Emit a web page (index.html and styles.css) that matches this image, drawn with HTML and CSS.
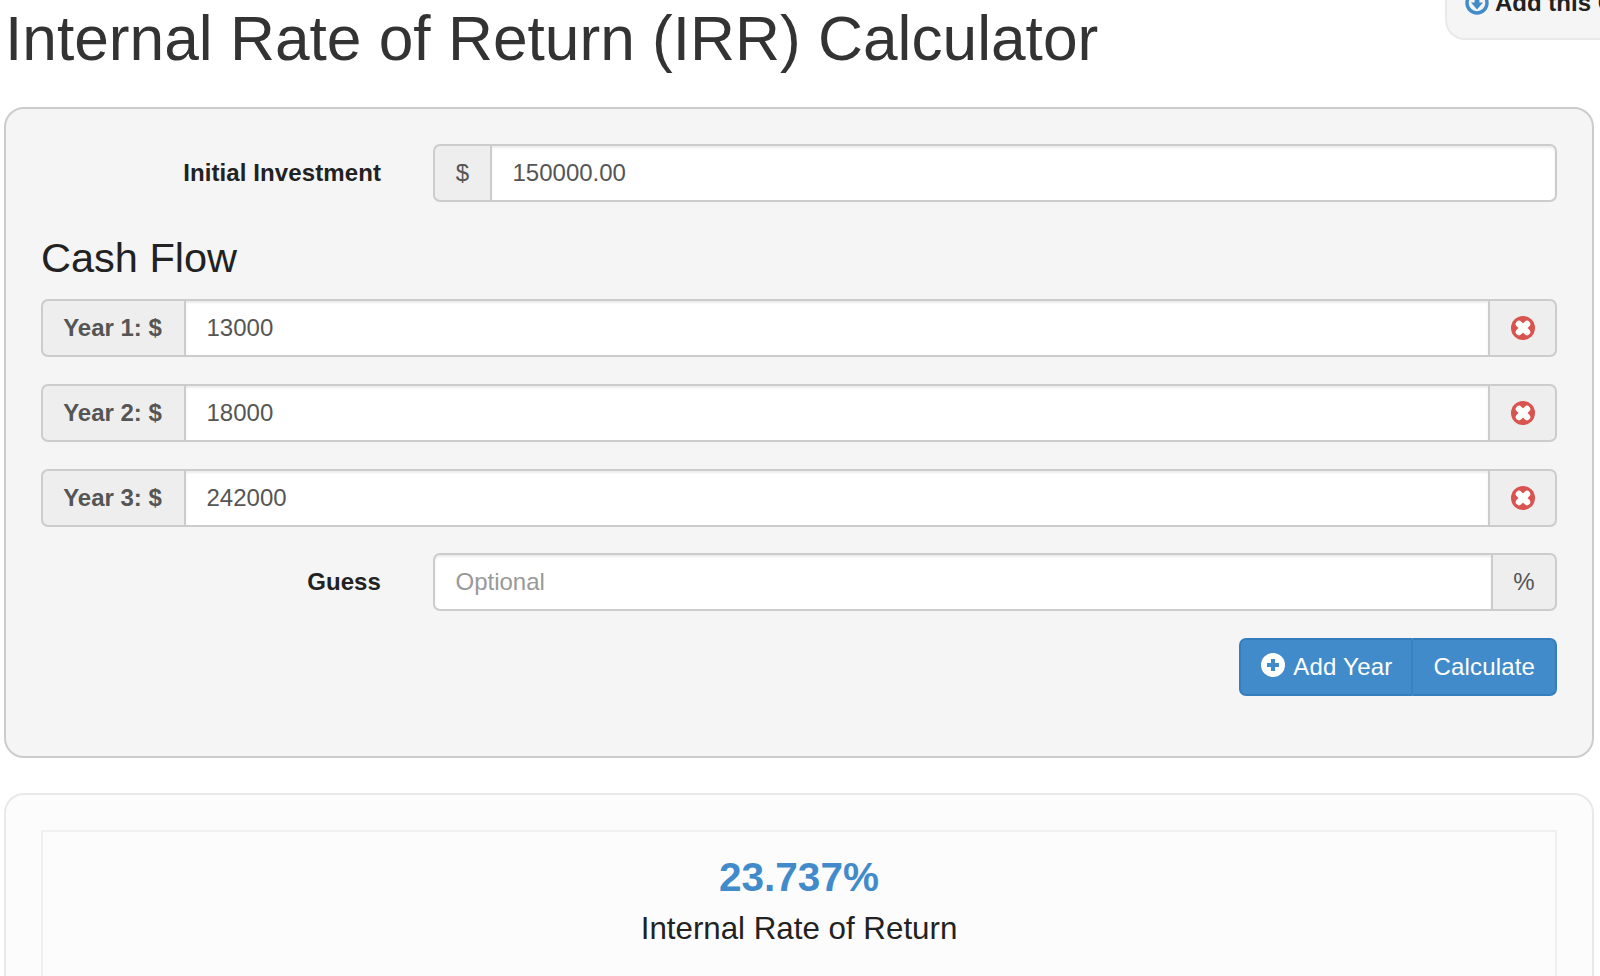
FILE: index.html
```html
<!DOCTYPE html>
<html lang="en">
<head>
    <meta charset="UTF-8">
    <title>Internal Rate of Return (IRR) Calculator</title>
    <link rel="stylesheet" href="styles.css">
</head>
<body>
    <div class="irr-page">
        <div class="add-tool">
            <svg class="add-tool-icon" viewBox="0 0 24 24">
                <circle cx="12" cy="12" r="10" fill="none" stroke="#428bca" stroke-width="3.4"/>
                <path d="M9.6 5.500h4.800v6h3.600L12 18.400 6 11.500h3.600z" fill="#428bca"/>
            </svg>
            <span>Add this Calculator</span>
        </div>

        <h1 class="irr-title">Internal Rate of Return (IRR) Calculator</h1>

        <form class="irr-well">
            <div class="form-row">
                <label class="form-label">Initial Investment</label>
                <div class="input-group">
                    <span class="addon addon-left">$</span>
                    <input class="form-control" type="text" value="150000.00">
                </div>
            </div>

            <h3 class="cash-title">Cash Flow</h3>

            <div class="input-group year-row">
                <span class="addon addon-left addon-year">Year 1: $</span>
                <input class="form-control" type="text" value="13000">
                <span class="addon addon-right addon-remove">
                    <svg class="remove-icon" viewBox="0 0 24 24"><use href="#remove-sign"/></svg>
                </span>
            </div>
            <div class="input-group year-row">
                <span class="addon addon-left addon-year">Year 2: $</span>
                <input class="form-control" type="text" value="18000">
                <span class="addon addon-right addon-remove">
                    <svg class="remove-icon" viewBox="0 0 24 24"><use href="#remove-sign"/></svg>
                </span>
            </div>
            <div class="input-group year-row">
                <span class="addon addon-left addon-year">Year 3: $</span>
                <input class="form-control" type="text" value="242000">
                <span class="addon addon-right addon-remove">
                    <svg class="remove-icon" viewBox="0 0 24 24"><use href="#remove-sign"/></svg>
                </span>
            </div>

            <div class="form-row">
                <label class="form-label">Guess</label>
                <div class="input-group">
                    <input class="form-control form-control-left" type="text" placeholder="Optional">
                    <span class="addon addon-right addon-percent">%</span>
                </div>
            </div>

            <div class="btn-row">
                <div class="btn-group">
                    <button class="btn btn-add" type="button">
                        <svg class="plus-icon" viewBox="0 0 24 24">
                            <circle cx="12" cy="12" r="12" fill="#fff"/>
                            <path d="M10 6h4v4h4v4h-4v4h-4v-4H6v-4h4z" fill="#428bca"/>
                        </svg>
                        Add Year
                    </button>
                    <button class="btn btn-calc" type="button">Calculate</button>
                </div>
            </div>
        </form>

        <div class="irr-result">
            <div class="result-box">
                <div class="result-value">23.737%</div>
                <div class="result-label">Internal Rate of Return</div>
            </div>
        </div>
    </div>

    <svg class="svg-defs" width="0" height="0">
        <symbol id="remove-sign" viewBox="0 0 24 24">
            <circle cx="12" cy="12" r="12" fill="#d9534f"/>
            <path d="M8 8l8 8M16 8l-8 8" fill="none" stroke="#fff" stroke-width="6.500" stroke-linecap="round"/>
        </symbol>
    </svg>
</body>
</html>
```

FILE: styles.css
```css
html, body {
    margin: 0;
    height: 976px;
    overflow: hidden;
    background-color: #fff;
}
body {
    font-family: "Liberation Sans", Arial, sans-serif;
    font-size: 24px;
    color: #333;
}
.svg-defs {
    position: absolute;
}
.irr-page {
    position: relative;
    height: 976px;
    overflow: hidden;
    padding: 0 6px 0 4px;
}
.irr-title {
    margin: 0;
    height: 78px;
    padding-left: 1px;
    font-size: 62.25px;
    line-height: 77px;
    font-weight: 400;
}
.add-tool {
    position: absolute;
    top: -20px;
    left: 1445px;
    width: 155px;
    height: 60px;
    box-sizing: border-box;
    padding: 0 0 14px 18px;
    display: flex;
    align-items: center;
    gap: 6px;
    overflow: hidden;
    white-space: nowrap;
    background-color: #f5f5f5;
    border: 2px solid #e9e9e9;
    border-right: 0;
    border-radius: 20px 0 0 20px;
    font-weight: 700;
    color: #222;
}
.add-tool-icon {
    width: 24px;
    height: 24px;
    flex: none;
}
.irr-well {
    margin-top: 29px;
    height: 651px;
    box-sizing: border-box;
    padding: 34.5px 35px 0;
    background-color: #f5f5f5;
    border: 2px solid #ccc;
    border-radius: 20px;
}
.form-row {
    display: flex;
    align-items: center;
}
.form-label {
    width: 340px;
    padding-right: 52px;
    flex: none;
    text-align: right;
    font-weight: 700;
    color: #222;
    letter-spacing: 0.1px;
}
.input-group {
    display: flex;
    flex: 1;
    height: 58px;
}
.addon {
    display: flex;
    align-items: center;
    justify-content: center;
    flex: none;
    box-sizing: border-box;
    background-color: #eee;
    border: 2px solid #ccc;
    color: #555;
}
.addon-left {
    width: 57px;
    border-right: 0;
    border-radius: 7px 0 0 7px;
}
.addon-year {
    width: 143px;
    padding-right: 2px;
    font-weight: 700;
}
.addon-right {
    width: 67px;
    border-left: 0;
    border-radius: 0 7px 7px 0;
}
.addon-percent {
    width: 64px;
}
.form-control {
    flex: 1;
    min-width: 0;
    box-sizing: border-box;
    height: 58px;
    padding: 0 20.5px;
    background-color: #fff;
    border: 2px solid #ccc;
    border-radius: 0 7px 7px 0;
    box-shadow: inset 0 2px 2px rgba(0, 0, 0, 0.075);
    font-family: inherit;
    font-size: 24px;
    color: #555;
    outline: none;
}
.year-row .form-control {
    border-radius: 0;
}
.form-control-left {
    border-radius: 7px 0 0 7px;
}
.form-control::placeholder {
    color: #999;
    opacity: 1;
}
.cash-title {
    margin: 31.5px 0 16px;
    height: 50px;
    font-size: 41.5px;
    line-height: 50px;
    font-weight: 400;
    color: #222;
}
.year-row {
    flex: none;
    margin-bottom: 26.75px;
}
.remove-icon {
    width: 24px;
    height: 24px;
}
.btn-row {
    display: flex;
    justify-content: flex-end;
    margin-top: 26.75px;
}
.btn-group {
    display: flex;
    height: 58px;
}
.btn {
    display: flex;
    align-items: center;
    box-sizing: border-box;
    height: 58px;
    background-color: #428bca;
    border: 2px solid #357ebd;
    font-family: inherit;
    font-size: 24px;
    letter-spacing: 0.25px;
    color: #fff;
}
.btn-add {
    gap: 8px;
    padding: 0 18px 0 20px;
    border-right-color: #3b83c0;
    border-radius: 7px 0 0 7px;
}
.btn-calc {
    padding: 0 20px 0 21px;
    border-left: 0;
    border-radius: 0 7px 7px 0;
    letter-spacing: 0.15px;
}
.plus-icon {
    width: 24px;
    height: 24px;
    margin-top: -4px;
}
.irr-result {
    margin-top: 35px;
    height: 300px;
    box-sizing: border-box;
    padding: 35px 35px 0;
    background-color: #fcfcfc;
    border: 2px solid #e9e9e9;
    border-radius: 20px;
}
.result-box {
    height: 300px;
    box-sizing: border-box;
    padding-top: 16px;
    border: 2px solid #f0f0f0;
    text-align: center;
}
.result-value {
    font-size: 40.5px;
    line-height: 59px;
    font-weight: 700;
    color: #428bca;
}
.result-label {
    font-size: 31.3px;
    line-height: 44px;
    color: #222;
}
```
